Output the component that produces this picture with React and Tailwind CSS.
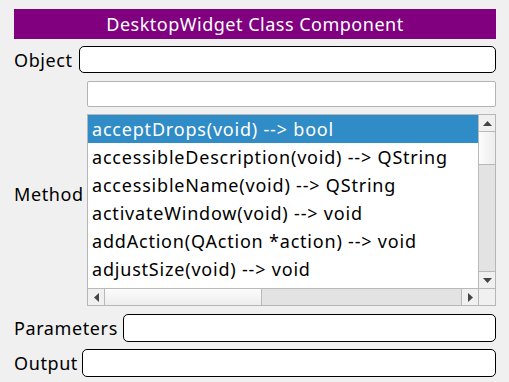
import React from "react";

const rows = [
  "acceptDrops(void) --> bool",
  "accessibleDescription(void) --> QString",
  "accessibleName(void) --> QString",
  "activateWindow(void) --> void",
  "addAction(QAction *action) --> void",
  "adjustSize(void) --> void",
];

function Tri({ dir }) {
  const pts = {
    up: "0,5 9,5 4.5,0",
    down: "0,0 9,0 4.5,5",
    left: "5,0 5,9 0,4.5",
    right: "0,0 0,9 5,4.5",
  }[dir];
  const w = dir === "up" || dir === "down" ? 9 : 5;
  const h = dir === "up" || dir === "down" ? 5 : 9;
  return (
    <svg width={w} height={h} viewBox={`0 0 ${w} ${h}`}>
      <polygon points={pts} fill="#444" />
    </svg>
  );
}

export default function App() {
  return (
    <div
      className="w-[509px] h-[382px] bg-[#f0f0f0] flex flex-col pt-[9px] pl-[14px] pr-[13px] text-black"
      style={{ fontFamily: '"Noto Sans", "Open Sans", sans-serif' }}
    >
      <div className="h-[30px] bg-[#800080] text-white text-[18px] tracking-[0.5px] flex items-center justify-center leading-none">
        DesktopWidget Class Component
      </div>

      <div className="mt-[7px] h-[27px] flex items-center">
        <div className="w-[65px] text-[18px] tracking-[0.6px] leading-none">Object</div>
        <div className="flex-1 h-full bg-white border border-black rounded-[5px]" />
      </div>

      <div className="mt-[8px] flex">
        <div className="w-[73px] text-[18px] tracking-[0.6px] leading-none self-center">Method</div>
        <div className="flex-1 flex flex-col">
          <div className="h-[26px] bg-white border border-[#b3b3b3] rounded-[2px]" />
          <div className="mt-[7px] h-[192px] bg-white border border-[#b6b6b6] flex flex-col">
            <div className="h-[173px] flex">
              <div className="flex-1 overflow-hidden">
                {rows.map((r, i) => (
                  <div
                    key={r}
                    className={
                      "h-[28px] pl-[4px] flex items-center whitespace-nowrap text-[18px] tracking-[0.8px] leading-none " +
                      (i === 0 ? "bg-[#308cc6] text-white" : "")
                    }
                  >
                    {r}
                  </div>
                ))}
              </div>
              <div className="w-[17px] border-l border-[#b9b9b9] flex flex-col">
                <div className="h-[17px] border-b border-[#b9b9b9] bg-[#f0f0f0] flex items-center justify-center">
                  <Tri dir="up" />
                </div>
                <div className="h-[33px] border-b border-[#b9b9b9] bg-gradient-to-r from-[#fcfcfc] to-[#ededed]" />
                <div className="flex-1 bg-[#e3e3e3]" />
                <div className="h-[17px] border-t border-[#b9b9b9] bg-[#f0f0f0] flex items-center justify-center">
                  <Tri dir="down" />
                </div>
              </div>
            </div>
            <div className="h-[17px] border-t border-[#b9b9b9] flex">
              <div className="w-[17px] border-r border-[#b9b9b9] bg-[#f0f0f0] flex items-center justify-center">
                <Tri dir="left" />
              </div>
              <div className="w-[157px] border-r border-[#b9b9b9] bg-gradient-to-b from-[#fcfcfc] to-[#ededed]" />
              <div className="flex-1 bg-[#e3e3e3]" />
              <div className="w-[17px] border-l border-[#b9b9b9] bg-[#f0f0f0] flex items-center justify-center">
                <Tri dir="right" />
              </div>
              <div className="w-[17px] border-l border-[#b9b9b9] bg-[#f0f0f0]" />
            </div>
          </div>
        </div>
      </div>

      <div className="mt-[8px] h-[28px] flex items-center">
        <div className="w-[109px] text-[18px] tracking-[0.6px] leading-none">Parameters</div>
        <div className="flex-1 h-full bg-white border border-black rounded-[5px]" />
      </div>

      <div className="mt-[7px] h-[28px] flex items-center">
        <div className="w-[68px] text-[18px] tracking-[0.6px] leading-none">Output</div>
        <div className="flex-1 h-full bg-white border border-black rounded-[5px]" />
      </div>
    </div>
  );
}
